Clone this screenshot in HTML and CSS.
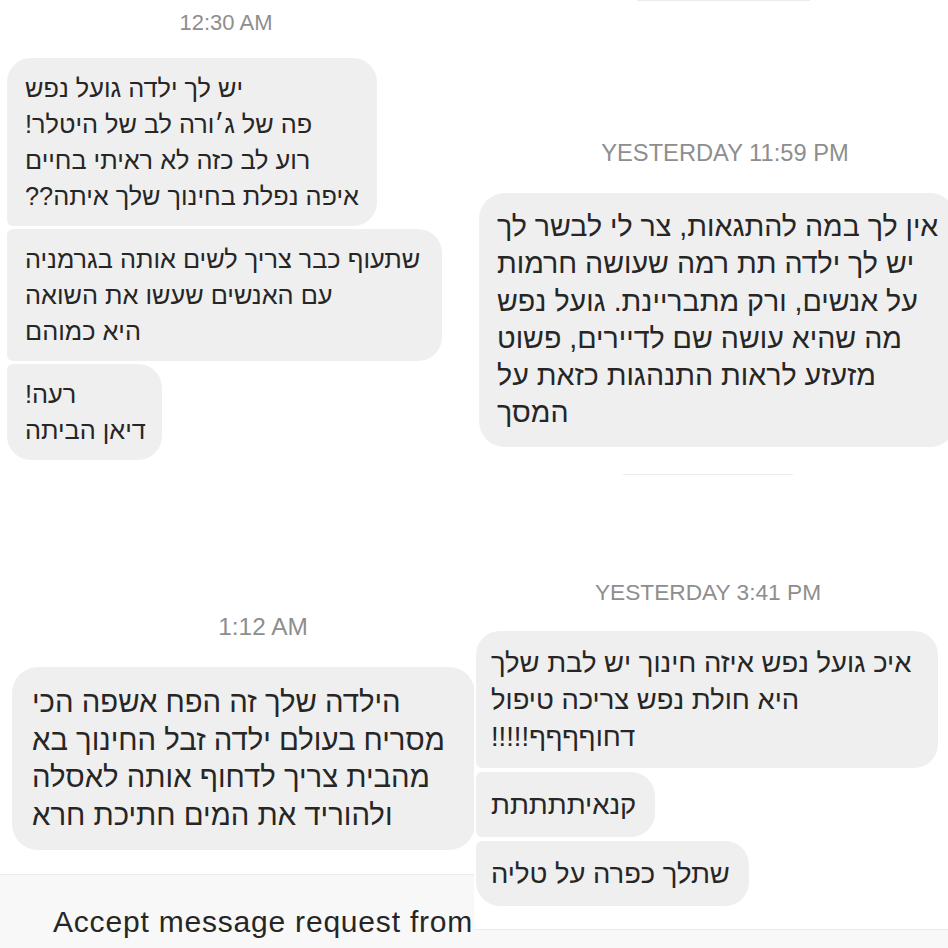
FILE: index.html
```html
<!DOCTYPE html>
<html lang="he">
<head>
<meta charset="utf-8">
<title>Messages</title>
<link rel="stylesheet" href="styles.css">
</head>
<body>
<div class="collage">
  <section class="panel tl">
    <div class="stamp">12:30 AM</div>
    <div class="thread">
      <div class="bubble first">יש לך ילדה גועל נפש<br>פה של ג׳ורה לב של היטלר!<br>רוע לב כזה לא ראיתי בחיים<br>איפה נפלת בחינוך שלך איתה??</div>
      <div class="bubble middle">שתעוף כבר צריך לשים אותה בגרמניה<br>עם האנשים שעשו את השואה<br>היא כמוהם</div>
      <div class="bubble last">רעה!<br>דיאן הביתה</div>
    </div>
  </section>

  <section class="panel tr">
    <div class="edge"></div>
    <div class="stamp">YESTERDAY 11:59 PM</div>
    <div class="thread">
      <div class="bubble single">אין לך במה להתגאות, צר לי לבשר לך<br>יש לך ילדה תת רמה שעושה חרמות<br>על אנשים, ורק מתבריינת. גועל נפש<br>מה שהיא עושה שם לדיירים, פשוט<br>מזעזע לראות התנהגות כזאת על<br>המסך</div>
    </div>
  </section>

  <section class="panel bl">
    <div class="stamp">1:12 AM</div>
    <div class="thread">
      <div class="bubble single">הילדה שלך זה הפח אשפה הכי<br>מסריח בעולם ילדה זבל החינוך בא<br>מהבית צריך לדחוף אותה לאסלה<br>ולהוריד את המים חתיכת חרא</div>
    </div>
    <div class="request">Accept message request from</div>
  </section>

  <section class="panel br">
    <div class="edge"></div>
    <div class="stamp">YESTERDAY 3:41 PM</div>
    <div class="thread">
      <div class="bubble first">איכ גועל נפש איזה חינוך יש לבת שלך<br>היא חולת נפש צריכה טיפול<br>דחוףףףף!!!!!</div>
      <div class="bubble middle">קנאיתתתתת</div>
      <div class="bubble last">שתלך כפרה על טליה</div>
    </div>
    <div class="request"></div>
  </section>
</div>
</body>
</html>
```

FILE: styles.css
```css
* { box-sizing: border-box; }

html, body {
  margin: 0;
  padding: 0;
  background: #ffffff;
}

body {
  width: 948px;
  height: 948px;
  overflow: hidden;
  font-family: "Liberation Sans", "DejaVu Sans", Arial, sans-serif;
  color: #262626;
}

.collage {
  display: grid;
  grid-template-columns: 474px 474px;
  grid-template-rows: 474px 474px;
  width: 948px;
  height: 948px;
}

.panel {
  display: flex;
  flex-direction: column;
  overflow: hidden;
  background: #ffffff;
}

.stamp {
  color: #8e8e8e;
  text-align: center;
  white-space: nowrap;
}

.thread {
  display: flex;
  flex-direction: column;
  align-items: flex-start;
}

.bubble {
  background: #efefef;
  direction: rtl;
  text-align: left;
  white-space: nowrap;
  color: #262626;
  border-radius: 24px;
}

.bubble.first  { border-radius: 24px 24px 24px 6px; }
.bubble.middle { border-radius: 6px 24px 24px 6px; }
.bubble.last   { border-radius: 6px 24px 24px 24px; }
.bubble.single { border-radius: 24px; }

.edge {
  height: 1px;
  background: #ebebeb;
  flex: none;
}

/* top-left */
.tl { padding-top: 10px; }
.tl .stamp { font-size: 22px; line-height: 26px; padding-right: 22px; }
.tl .thread { margin-top: 22px; padding-left: 7px; gap: 3px; }
.tl .bubble { font-size: 25.3px; line-height: 36px; padding: 12px 18px; }
.tl .bubble.middle { padding-right: 22px; }
.tl .bubble.last { padding-right: 16px; }

/* top-right */
.tr .edge { width: 173px; margin-left: 163px; }
.tr .stamp { margin-top: 138px; font-size: 23.7px; line-height: 28px; padding-left: 28px; }
.tr .thread { margin-top: 26px; padding-left: 5px; }
.tr .bubble { font-size: 28.6px; line-height: 37.3px; padding: 15px 18px; border-radius: 26px; }

/* bottom-left */
.bl .stamp { margin-top: 139px; font-size: 24.4px; line-height: 28px; padding-left: 52px; }
.bl .thread { margin-top: 26px; padding-left: 12px; }
.bl .bubble { font-size: 29.3px; line-height: 37.7px; padding: 16px 30px 16px 20px; border-radius: 26px; }

.request {
  flex: 1;
  align-self: stretch;
  background: #f8f8f8;
  border-top: 1px solid #ececec;
  white-space: nowrap;
}

.bl .request {
  margin-top: 24px;
  padding: 30px 0 0 53px;
  font-size: 30px;
  line-height: 34px;
  letter-spacing: 0.8px;
  color: #262626;
}

/* bottom-right */
.br .edge { width: 170px; margin-left: 149px; }
.br .stamp { margin-top: 103px; font-size: 22.7px; line-height: 28px; padding-right: 6px; }
.br .thread { margin-top: 25px; padding-left: 2px; gap: 4px; }
.br .bubble { font-size: 27.4px; line-height: 37px; padding: 13px 19px 13px 15px; }
.br .bubble.first { padding-right: 27px; }
.br .bubble.middle, .br .bubble.last { padding-top: 14px; padding-bottom: 14px; }
.br .request { margin-top: 23px; }
```
